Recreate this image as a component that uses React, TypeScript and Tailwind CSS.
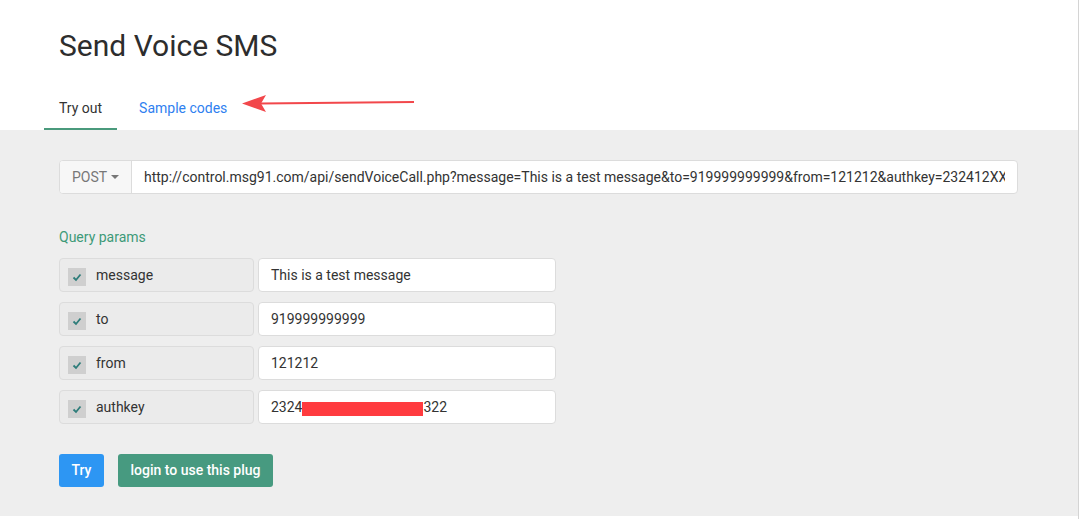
import React from 'react';

const params = [
  { key: 'message', value: 'This is a test message' },
  { key: 'to', value: '919999999999' },
  { key: 'from', value: '121212' },
  { key: 'authkey', value: '' },
];

function Check() {
  return (
    <span className="w-[18px] h-[18px] bg-[#cfcfcf] flex items-center justify-center">
      <svg width="10" height="10" viewBox="0 0 10 10">
        <path d="M1.5 5.5 L4 8 L8.5 2.5" fill="none" stroke="#2e7d7a" strokeWidth="1.8" />
      </svg>
    </span>
  );
}

export default function App() {
  return (
    <div className="w-[1079px] h-[519px] bg-white font-['Roboto',sans-serif] text-[#333] flex">
      <div className="flex-1 flex flex-col">
        {/* header */}
        <div className="px-[59px] pt-[28px]">
          <h1 className="text-[30px] leading-[36px] text-[#2d2d2d]">Send Voice SMS</h1>
          <div className="flex items-end mt-[34px] -ml-[15px] relative">
            <div className="px-[15px] pb-[10px] border-b-[2px] border-[#4a9a7c] text-[14px] leading-[20px]">Try out</div>
            <div className="pl-[22px] pb-[12px] text-[14px] leading-[20px] text-[#2f7ff0]">Sample codes</div>
            <svg className="absolute left-[198px] top-[-6px]" width="176" height="22" viewBox="0 0 176 22">
              <path d="M18 11.5 L172 10" stroke="#f2474b" strokeWidth="2" />
              <path d="M0 11.6 L24 3 L19 11.5 L24 20 Z" fill="#f2474b" />
            </svg>
          </div>
        </div>

        {/* body */}
        <div className="bg-[#eeeeee] flex-1 mb-[3px] px-[59px] pt-[30px]">
          <div className="flex w-[959px] h-[34px] rounded-[4px] border border-[#dcdcdc] bg-white overflow-hidden">
            <div className="w-[72px] bg-[#f7f7f7] border-r border-[#dcdcdc] flex items-center justify-center gap-[4px] text-[14px] text-[#777]">
              POST
              <span className="w-0 h-0 border-l-[4px] border-r-[4px] border-t-[4px] border-l-transparent border-r-transparent border-t-[#777]" />
            </div>
            <div className="flex-1 min-w-0 flex items-center px-[12px] text-[14px] text-[#333] whitespace-nowrap overflow-hidden">
              <span className="truncate [text-overflow:clip]">http://control.msg91.com/api/sendVoiceCall.php?message=This is a test message&amp;to=919999999999&amp;from=121212&amp;authkey=232412XX</span>
            </div>
          </div>

          <div className="mt-[33px] text-[14px] leading-[20px] text-[#3d9a78]">Query params</div>

          <div className="mt-[11px] flex flex-col gap-[10px]">
            {params.map((p) => (
              <div key={p.key} className="flex gap-[4px]">
                <div className="w-[195px] h-[34px] rounded-[4px] border border-[#dcdcdc] bg-[#ebebeb] flex items-center pl-[8px] gap-[10px] text-[14px]">
                  <span className="mt-[4px]"><Check /></span>
                  <span>{p.key}</span>
                </div>
                <div className="w-[298px] h-[34px] rounded-[4px] border border-[#dcdcdc] bg-white flex items-center px-[12px] text-[14px]">
                  {p.key === 'authkey' ? (
                    <>
                      2324
                      <span className="inline-block w-[121px] h-[14px] bg-[#ff3b3f] mt-[3px]" />
                      322
                    </>
                  ) : (
                    p.value
                  )}
                </div>
              </div>
            ))}
          </div>

          <div className="mt-[30px] flex gap-[14px]">
            <button className="h-[33px] w-[45px] rounded-[3px] bg-[#2d96f3] text-white text-[14px] font-medium">Try</button>
            <button className="h-[33px] w-[155px] rounded-[3px] bg-[#479a80] text-white text-[14px] font-medium">login to use this plug</button>
          </div>
        </div>
      </div>
      <div className="w-[1px] bg-[#d4d4d4]" />
    </div>
  );
}
